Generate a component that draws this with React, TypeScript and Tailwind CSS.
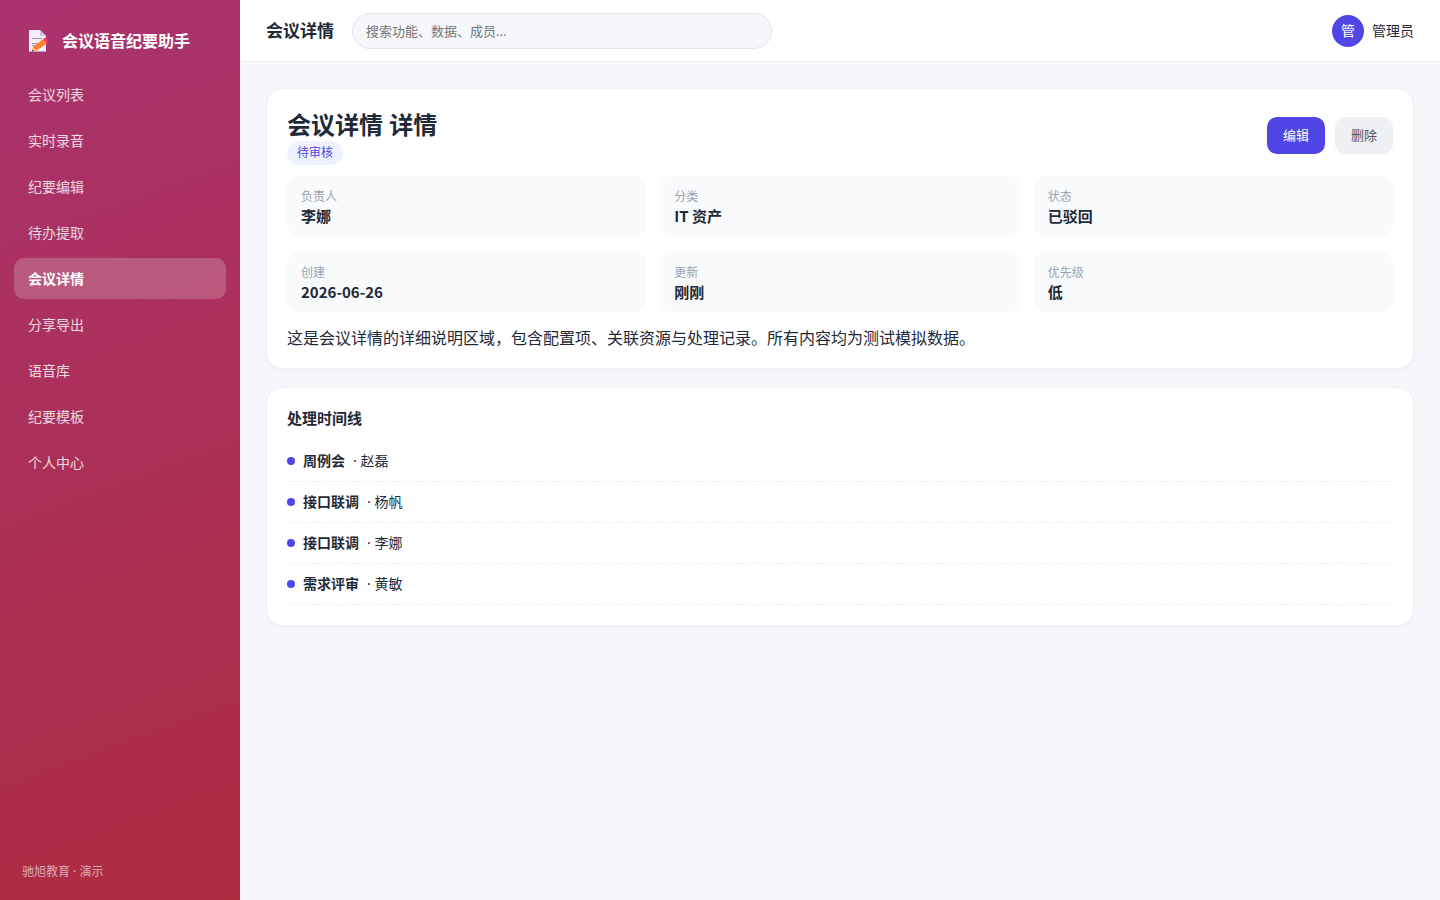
import clsx from 'clsx'

const NAV_ITEMS = [
  '会议列表',
  '实时录音',
  '纪要编辑',
  '待办提取',
  '会议详情',
  '分享导出',
  '语音库',
  '纪要模板',
  '个人中心',
]

const FIELDS = [
  { label: '负责人', value: '李娜' },
  { label: '分类', value: 'IT 资产' },
  { label: '状态', value: '已驳回' },
  { label: '创建', value: '2026-06-26' },
  { label: '更新', value: '刚刚' },
  { label: '优先级', value: '低' },
]

const TIMELINE = [
  { title: '周例会', person: '赵磊' },
  { title: '接口联调', person: '杨帆' },
  { title: '接口联调', person: '李娜' },
  { title: '需求评审', person: '黄敏' },
]

const CARD =
  'rounded-2xl border border-[#eff1f6] bg-white p-5 shadow-[0_1px_3px_rgba(15,23,42,0.03)]'

function MemoIcon() {
  return (
    <svg viewBox="0 0 22 22" className="size-[22px]" aria-hidden="true">
      <path
        d="M2 0h10l6 6v15q0 1-1 1H2q-1 0-1-1V1q0-1 1-1z"
        fill="#f3eef8"
      />
      <path d="M12 0l6 6h-5q-1 0-1-1z" fill="#cdc3dc" />
      <path d="M1 21h17q0 1-1 1H2q-1 0-1-1z" fill="#b9a9cb" />
      <path
        d="M4 8.5h10M4 13.5h7M4 15.5h5"
        stroke="#998ea4"
        strokeWidth="1"
        fill="none"
      />
      <path d="M5 17L15.2 9l3.6 4.4L8.8 20.6 4 21.5z" fill="#ff822d" />
      <path d="M5 17.3l3.4 3.3-4.4.9z" fill="#ffce7c" />
      <path d="M4.5 19.6l1.6 1.5-2.1.5z" fill="#321b41" />
      <path
        d="M15.2 9l1.6-1.1q1-.6 1.8.3l1.9 2.2q.7 1-.2 1.8l-1.5 1.2z"
        fill="#f92f60"
      />
    </svg>
  )
}

function Sidebar() {
  return (
    <aside className="flex w-60 shrink-0 flex-col bg-[linear-gradient(160deg,#a9336f,#ae2c40)] px-3.5 pt-5 pb-[18px] text-white">
      <div className="flex h-[42px] items-center gap-3 px-3.5">
        <MemoIcon />
        <span className="text-base font-bold">会议语音纪要助手</span>
      </div>
      <nav className="mt-3 flex flex-col gap-[5px]">
        {NAV_ITEMS.map((item) => {
          const active = item === '会议详情'
          return (
            <a
              key={item}
              href="#"
              aria-current={active ? 'page' : undefined}
              className={clsx(
                'flex h-[41px] items-center rounded-[10px] px-3.5 text-sm',
                active ? 'bg-white/20 font-bold' : 'text-white/80'
              )}
            >
              {item}
            </a>
          )
        })}
      </nav>
      <p className="mt-auto px-2 text-xs leading-5 text-white/60">
        驰旭教育 · 演示
      </p>
    </aside>
  )
}

function TopBar() {
  return (
    <header className="flex h-[62px] items-center border-b border-[#eceef3] bg-white px-[26px]">
      <h1 className="text-[17px] font-bold">会议详情</h1>
      <input
        type="search"
        aria-label="搜索"
        placeholder="搜索功能、数据、成员..."
        className="ml-[18px] h-9 w-[420px] rounded-full border border-[#e2e5ee] bg-[#f6f7fb] px-[13px] text-[13px] placeholder:text-[#757575]"
      />
      <div className="ml-auto flex items-center gap-2 text-sm">
        <span className="flex size-8 items-center justify-center rounded-full bg-[#4f46e5] text-white">
          管
        </span>
        <span>管理员</span>
      </div>
    </header>
  )
}

function DetailCard() {
  return (
    <section className={CARD}>
      <div className="mb-2.5 flex items-start justify-between">
        <div>
          <h2 className="text-2xl leading-8 font-bold">会议详情 详情</h2>
          <span className="flex h-6 w-fit items-center rounded-full bg-[#eef2ff] px-2.5 text-xs text-[#4f46e5]">
            待审核
          </span>
        </div>
        <div className="mt-2 flex gap-2.5 text-[13px]">
          <button
            type="button"
            className="h-[37px] rounded-[10px] bg-[#4f46e5] px-4 text-white"
          >
            编辑
          </button>
          <button
            type="button"
            className="h-[37px] rounded-[10px] bg-[#eef0f4] px-4 text-[#475569]"
          >
            删除
          </button>
        </div>
      </div>
      <dl className="grid grid-cols-3 gap-3.5 font-['Noto_Sans_CJK_SC',sans-serif]">
        {FIELDS.map((field) => (
          <div
            key={field.label}
            className="rounded-xl bg-[#f9fafc] px-3.5 py-[11px]"
          >
            <dt className="text-xs leading-5 text-[#98a2b3]">{field.label}</dt>
            <dd className="text-[15px] leading-5 font-bold">{field.value}</dd>
          </div>
        ))}
      </dl>
      <p className="mt-4 text-base leading-[19px]">
        这是会议详情的详细说明区域，包含配置项、关联资源与处理记录。所有内容均为测试模拟数据。
      </p>
    </section>
  )
}

function TimelineCard() {
  return (
    <section className={CARD}>
      <h3 className="mb-[13px] text-[15px] leading-5 font-bold">处理时间线</h3>
      <ul>
        {TIMELINE.map((entry, i) => (
          <li
            key={i}
            className="flex h-[41px] items-center gap-2 border-b border-dashed border-[#eceef2] text-sm"
          >
            <span className="size-2 rounded-full bg-[#4f46e5]" />
            <b>{entry.title}</b>
            <span>· {entry.person}</span>
          </li>
        ))}
      </ul>
    </section>
  )
}

export default function App() {
  return (
    <div className="flex min-h-screen bg-[#f5f7fb] font-['Noto_Sans','Noto_Sans_CJK_SC',sans-serif] text-[#1f2937]">
      <Sidebar />
      <div className="min-w-0 flex-1">
        <TopBar />
        <main className="flex flex-col gap-[18px] p-[26px]">
          <DetailCard />
          <TimelineCard />
        </main>
      </div>
    </div>
  )
}
